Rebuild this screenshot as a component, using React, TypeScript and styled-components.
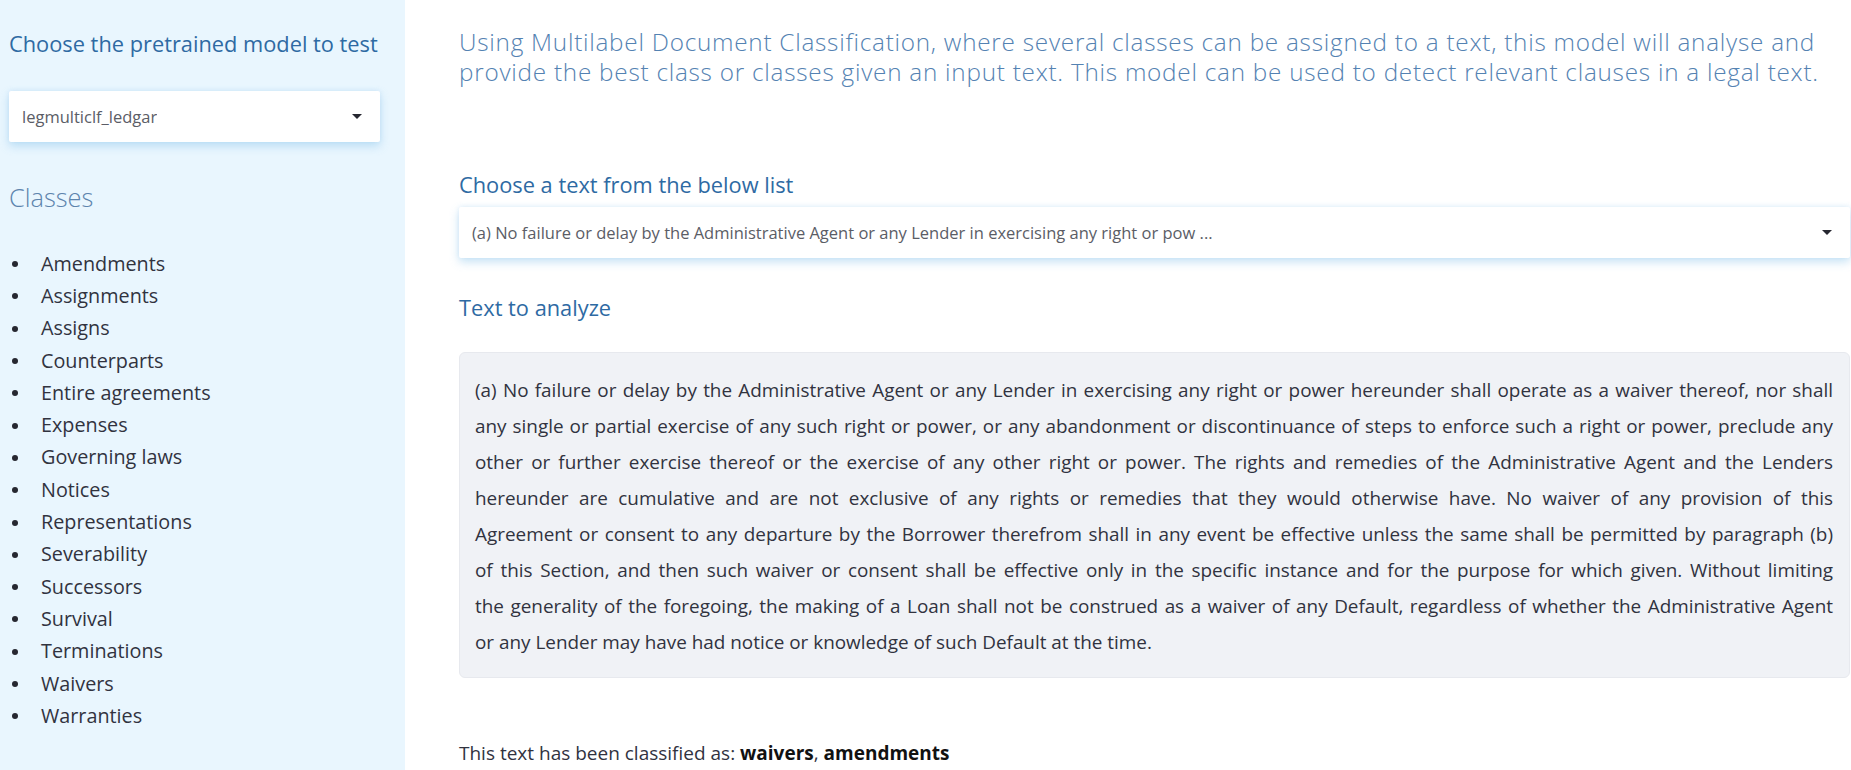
import React from "react";
import styled, { createGlobalStyle } from "styled-components";

const GlobalStyle = createGlobalStyle`
  html, body {
    margin: 0;
    padding: 0;
    background: #ffffff;
  }

  body {
    font-family: "Open Sans", "Noto Sans", "DejaVu Sans", sans-serif;
    color: #31333f;
  }

  * {
    box-sizing: border-box;
  }
`;

const classes = [
  "Amendments",
  "Assignments",
  "Assigns",
  "Counterparts",
  "Entire agreements",
  "Expenses",
  "Governing laws",
  "Notices",
  "Representations",
  "Severability",
  "Successors",
  "Survival",
  "Terminations",
  "Waivers",
  "Warranties",
];

// the clause, split where the original page wraps it
const sampleLines = [
  "(a) No failure or delay by the Administrative Agent or any Lender in exercising any right or power hereunder shall operate as a waiver thereof, nor shall",
  "any single or partial exercise of any such right or power, or any abandonment or discontinuance of steps to enforce such a right or power, preclude any",
  "other or further exercise thereof or the exercise of any other right or power. The rights and remedies of the Administrative Agent and the Lenders",
  "hereunder are cumulative and are not exclusive of any rights or remedies that they would otherwise have. No waiver of any provision of this",
  "Agreement or consent to any departure by the Borrower therefrom shall in any event be effective unless the same shall be permitted by paragraph (b)",
  "of this Section, and then such waiver or consent shall be effective only in the specific instance and for the purpose for which given. Without limiting",
  "the generality of the foregoing, the making of a Loan shall not be construed as a waiver of any Default, regardless of whether the Administrative Agent",
  "or any Lender may have had notice or knowledge of such Default at the time.",
];

const Layout = styled.div`
  display: flex;
  min-height: 100vh;
`;

const Sidebar = styled.aside`
  width: 405px;
  flex-shrink: 0;
  background: #e9f6fe;
  padding: 30px 25px 0 9px;
`;

const Main = styled.main`
  flex: 1;
  min-width: 0;
  padding: 27px 1px 0 54px;
`;

const SectionLabel = styled.h3<{ $gap?: number }>`
  margin: ${({ $gap }) => $gap ?? 0}px 0 0;
  font-size: 21.8px;
  line-height: 28px;
  font-weight: 500;
  color: #2e6aa3;
  white-space: nowrap;
`;

const SelectBox = styled.div<{ $gap?: number }>`
  display: flex;
  align-items: center;
  justify-content: space-between;
  height: 51px;
  margin-top: ${({ $gap }) => $gap ?? 0}px;
  padding: 0 18px 0 13px;
  background: #ffffff;
  border-radius: 2px;
  box-shadow: 0 4px 10px rgba(120, 185, 230, 0.42),
    0 -1px 4px rgba(120, 185, 230, 0.14);
`;

const SelectValue = styled.span`
  font-size: 16.5px;
  color: #5b5d66;
  white-space: nowrap;
  overflow: hidden;
`;

const Caret = styled.span`
  width: 0;
  height: 0;
  border-left: 5px solid transparent;
  border-right: 5px solid transparent;
  border-top: 5px solid #262730;
  flex-shrink: 0;
`;

const ClassesTitle = styled.h2`
  margin: 39px 0 0;
  font-size: 25.4px;
  line-height: 32px;
  font-weight: 300;
  color: #5d84ad;
`;

const ClassList = styled.ul`
  list-style: none;
  margin: 34px 0 0;
  padding: 0 0 0 3px;
`;

const ClassItem = styled.li`
  display: flex;
  align-items: center;
  height: 32.3px;
  font-size: 19.8px;
  color: #31333f;
`;

const Bullet = styled.span`
  width: 6px;
  height: 6px;
  border-radius: 50%;
  background: #262730;
  margin: 2px 23px 0 0;
  flex-shrink: 0;
`;

const Intro = styled.p`
  margin: 0;
  font-size: 24.3px;
  line-height: 30px;
  letter-spacing: 0.75px;
  font-weight: 300;
  color: #5482b2;
`;

const TextPanel = styled.div`
  margin-top: 30px;
  padding: 19px 16px 17px 15px;
  background: #f0f2f6;
  border: 1px solid #e7e9ee;
  border-radius: 6px;
`;

const PanelText = styled.p`
  margin: 0;
  font-size: 18.9px;
  line-height: 36px;
  color: #31333f;
`;

const PanelLine = styled.span<{ $last?: boolean }>`
  display: block;
  white-space: nowrap;
  text-align: justify;
  text-align-last: ${({ $last }) => ($last ? "left" : "justify")};
`;

const Result = styled.p`
  margin: 63px 0 0;
  font-size: 19px;
  line-height: 24px;
  color: #31333f;

  strong {
    font-weight: 700;
    color: #111111;
  }
`;

export default function App() {
  return (
    <>
      <GlobalStyle />
      <Layout>
        <Sidebar>
          <SectionLabel>Choose the pretrained model to test</SectionLabel>
          <SelectBox $gap={33}>
            <SelectValue>legmulticlf_ledgar</SelectValue>
            <Caret />
          </SelectBox>

          <ClassesTitle>Classes</ClassesTitle>
          <ClassList>
            {classes.map((name) => (
              <ClassItem key={name}>
                <Bullet />
                {name}
              </ClassItem>
            ))}
          </ClassList>
        </Sidebar>

        <Main>
          <Intro>
            Using Multilabel Document Classification, where several classes
            can be assigned to a text, this model will analyse and provide the
            best class or classes given an input text. This model can be used
            to detect relevant clauses in a legal text.
          </Intro>

          <SectionLabel $gap={84}>Choose a text from the below list</SectionLabel>
          <SelectBox $gap={8}>
            <SelectValue>
              (a) No failure or delay by the Administrative Agent or any Lender
              in exercising any right or pow ...
            </SelectValue>
            <Caret />
          </SelectBox>

          <SectionLabel $gap={36}>Text to analyze</SectionLabel>
          <TextPanel>
            <PanelText>
              {sampleLines.map((line, i) => (
                <PanelLine key={i} $last={i === sampleLines.length - 1}>
                  {line}
                </PanelLine>
              ))}
            </PanelText>
          </TextPanel>

          <Result>
            This text has been classified as: <strong>waivers</strong>,{" "}
            <strong>amendments</strong>
          </Result>
        </Main>
      </Layout>
    </>
  );
}
